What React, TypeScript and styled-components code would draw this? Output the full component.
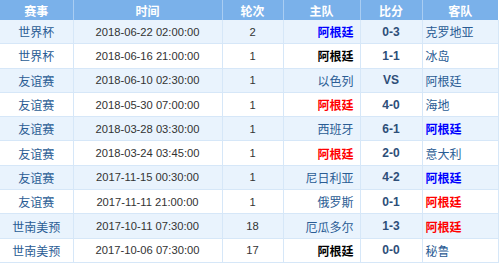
import React from "react";
import styled, { createGlobalStyle } from "styled-components";

const Global = createGlobalStyle`
  html, body { margin: 0; padding: 0; background: #fff; }
  body { font-family: "Liberation Sans", "Noto Sans CJK SC", sans-serif; }
`;

const Table = styled.table`
  width: 498px;
  border-collapse: collapse;
  table-layout: fixed;
  font-size: 12px;
  font-family: "Liberation Sans", "Noto Sans CJK SC", sans-serif;
`;

const HeadCell = styled.th`
  height: 20px;
  padding: 0;
  background: #7ab1ea;
  color: #fff;
  font-weight: bold;
  text-align: center;
  border-right: 1px solid #a9cdf2;
  &:last-child { border-right: none; }
`;

const Row = styled.tr<{ $alt: boolean }>`
  background: ${(p) => (p.$alt ? "#e9f3fd" : "#ffffff")};
`;

type Align = "left" | "center" | "right";

const Cell = styled.td<{ $align?: Align; $tone?: string; $bold?: boolean; $small?: boolean }>`
  height: 23.3px;
  padding: 0 ${(p) => (p.$align === "right" ? "6px" : p.$align === "left" ? "3px" : "0")};
  text-align: ${(p) => p.$align || "center"};
  color: ${(p) => p.$tone || "#333"};
  font-weight: ${(p) => (p.$bold ? "bold" : "normal")};
  font-size: ${(p) => (p.$small ? "11.2px" : "12px")};
  border: 1px solid #d6e7f8;
  border-top: none;
  white-space: nowrap;
  &:first-child { border-left: none; }
`;

type Result = "win" | "draw" | "loss" | "none";

const teamStyle = (r: Result) => {
  if (r === "win") return { tone: "#ff0000", bold: true };
  if (r === "loss") return { tone: "#0000ff", bold: true };
  if (r === "draw") return { tone: "#000000", bold: true };
  return { tone: "#2a5c94", bold: false };
};

const rows: [string, string, string, string, Result, string, string, Result][] = [
  ["世界杯", "2018-06-22 02:00:00", "2", "阿根廷", "loss", "0-3", "克罗地亚", "none"],
  ["世界杯", "2018-06-16 21:00:00", "1", "阿根廷", "draw", "1-1", "冰岛", "none"],
  ["友谊赛", "2018-06-10 02:30:00", "1", "以色列", "none", "VS", "阿根廷", "none"],
  ["友谊赛", "2018-05-30 07:00:00", "1", "阿根廷", "win", "4-0", "海地", "none"],
  ["友谊赛", "2018-03-28 03:30:00", "1", "西班牙", "none", "6-1", "阿根廷", "loss"],
  ["友谊赛", "2018-03-24 03:45:00", "1", "阿根廷", "win", "2-0", "意大利", "none"],
  ["友谊赛", "2017-11-15 00:30:00", "1", "尼日利亚", "none", "4-2", "阿根廷", "loss"],
  ["友谊赛", "2017-11-11 21:00:00", "1", "俄罗斯", "none", "0-1", "阿根廷", "win"],
  ["世南美预", "2017-10-11 07:30:00", "18", "厄瓜多尔", "none", "1-3", "阿根廷", "win"],
  ["世南美预", "2017-10-06 07:30:00", "17", "阿根廷", "draw", "0-0", "秘鲁", "none"],
];

export default function App() {
  return (
    <>
      <Global />
      <Table>
        <colgroup>
          <col style={{ width: 73 }} />
          <col style={{ width: 149 }} />
          <col style={{ width: 61 }} />
          <col style={{ width: 77 }} />
          <col style={{ width: 62 }} />
          <col style={{ width: 76 }} />
        </colgroup>
        <thead>
          <tr>
            <HeadCell>赛事</HeadCell>
            <HeadCell>时间</HeadCell>
            <HeadCell>轮次</HeadCell>
            <HeadCell>主队</HeadCell>
            <HeadCell>比分</HeadCell>
            <HeadCell>客队</HeadCell>
          </tr>
        </thead>
        <tbody>
          {rows.map((r, i) => {
            const h = teamStyle(r[4]);
            const a = teamStyle(r[7]);
            return (
              <Row key={i} $alt={i % 2 === 0}>
                <Cell $tone="#2a5c94">{r[0]}</Cell>
                <Cell $small>{r[1]}</Cell>
                <Cell $small>{r[2]}</Cell>
                <Cell $align="right" $tone={h.tone} $bold={h.bold}>{r[3]}</Cell>
                <Cell $tone="#2d4e78" $bold>{r[5]}</Cell>
                <Cell $align="left" $tone={a.tone} $bold={a.bold}>{r[6]}</Cell>
              </Row>
            );
          })}
        </tbody>
      </Table>
    </>
  );
}
